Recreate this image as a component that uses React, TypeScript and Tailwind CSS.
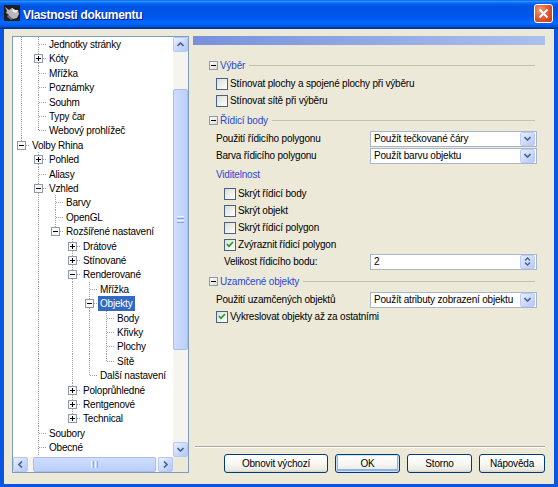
import React from "react";

type Row = { t: string; l: number; box?: "+" | "-"; sel?: boolean };

const ROWS: Row[] = [
  { t: "Jednotky stránky", l: 1 },
  { t: "Kóty", l: 1, box: "+" },
  { t: "Mřížka", l: 1 },
  { t: "Poznámky", l: 1 },
  { t: "Souhm", l: 1 },
  { t: "Typy čar", l: 1 },
  { t: "Webový prohlížeč", l: 1 },
  { t: "Volby Rhina", l: 0, box: "-" },
  { t: "Pohled", l: 1, box: "+" },
  { t: "Aliasy", l: 1 },
  { t: "Vzhled", l: 1, box: "-" },
  { t: "Barvy", l: 2 },
  { t: "OpenGL", l: 2 },
  { t: "Rozšířené nastavení", l: 2, box: "-" },
  { t: "Drátové", l: 3, box: "+" },
  { t: "Stínované", l: 3, box: "+" },
  { t: "Renderované", l: 3, box: "-" },
  { t: "Mřížka", l: 4 },
  { t: "Objekty", l: 4, box: "-", sel: true },
  { t: "Body", l: 5 },
  { t: "Křivky", l: 5 },
  { t: "Plochy", l: 5 },
  { t: "Sítě", l: 5 },
  { t: "Další nastavení", l: 4 },
  { t: "Poloprůhledné", l: 3, box: "+" },
  { t: "Rentgenové", l: 3, box: "+" },
  { t: "Technical", l: 3, box: "+" },
  { t: "Soubory", l: 1 },
  { t: "Obecné", l: 1 },
];

function continues(idx: number, level: number): boolean {
  for (let j = idx + 1; j < ROWS.length; j++) {
    if (ROWS[j].l < level) return false;
    if (ROWS[j].l === level) return true;
  }
  return level === 1;
}

const DOT = "#a0a0a0";

function Cell({ h, full, top, bottom, own, box }: { h: number; full?: boolean; top?: boolean; bottom?: boolean; own?: boolean; box?: "+" | "-" }) {
  const m = Math.floor(h / 2);
  return (
    <svg width="17" height={h} className="block shrink-0">
      {full && <line x1="8.5" y1="0" x2="8.5" y2={h} stroke={DOT} strokeDasharray="1 1" />}
      {own && top && <line x1="8.5" y1="0" x2="8.5" y2={bottom ? h : m} stroke={DOT} strokeDasharray="1 1" />}
      {own && <line x1="9" y1={m + 0.5} x2="17" y2={m + 0.5} stroke={DOT} strokeDasharray="1 1" />}
      {box && (
        <g>
          <rect x="4.5" y={m - 3.5} width="8" height="8" fill="#f7f7f3" stroke="#8e9aab" />
          <rect x="6" y={m} width="5" height="1" fill="#000" />
          {box === "+" && <rect x="8" y={m - 2} width="1" height="5" fill="#000" />}
        </g>
      )}
    </svg>
  );
}

function TreeRow({ r, idx }: { r: Row; idx: number }) {
  const h = idx % 5 === 1 || idx % 5 === 3 ? 15 : 14;
  const cells = [];
  for (let i = 0; i < r.l; i++) {
    cells.push(<Cell key={i} h={h} full={continues(idx, i)} />);
  }
  cells.push(<Cell key="own" h={h} own top bottom={continues(idx, r.l)} box={r.box} />);
  return (
    <div className={h === 15 ? "h-[15px] flex items-center whitespace-nowrap" : "h-[14px] flex items-center whitespace-nowrap"}>
      {cells}
      <span className={r.sel ? "h-full flex items-center px-[2px] bg-[#316ac5] text-white" : "h-full flex items-center px-[2px]"}>{r.t}</span>
    </div>
  );
}

const SB_BTN = "bg-[linear-gradient(135deg,#e9f0fe_0%,#c6d6fb_60%,#b3c8f6_100%)] border border-[#b5c9f4] rounded-[2px] flex items-center justify-center shrink-0";
const ARROW = "#4d6185";

function VScroll() {
  return (
    <div className="w-[15px] h-full flex flex-col bg-[#f5f4ef] shrink-0">
      <div className={SB_BTN + " h-[15px] w-[15px]"}>
        <svg width="7" height="5"><path d="M0.5 4 L3.5 1 L6.5 4" stroke={ARROW} strokeWidth="1.6" fill="none" /></svg>
      </div>
      <div className="h-[37px]" />
      <div className="h-[261px] w-[15px] rounded-[2px] border border-[#a9bdf0] bg-[linear-gradient(to_right,#cfdcfd,#bccff9)] flex flex-col items-center justify-center gap-[1px]">
        <div className="w-[7px] h-px bg-[#eef3ff]" />
        <div className="w-[7px] h-px bg-[#8ca6e3]" />
        <div className="w-[7px] h-px bg-[#eef3ff]" />
        <div className="w-[7px] h-px bg-[#8ca6e3]" />
      </div>
      <div className="flex-1" />
      <div className={SB_BTN + " h-[15px] w-[15px]"}>
        <svg width="7" height="5"><path d="M0.5 1 L3.5 4 L6.5 1" stroke={ARROW} strokeWidth="1.6" fill="none" /></svg>
      </div>
    </div>
  );
}

function HScroll() {
  return (
    <div className="flex-1 h-[15px] flex bg-[#f5f4ef]">
      <div className={SB_BTN + " h-[15px] w-[15px]"}>
        <svg width="5" height="7"><path d="M4 0.5 L1 3.5 L4 6.5" stroke={ARROW} strokeWidth="1.6" fill="none" /></svg>
      </div>
      <div className="w-[5px]" />
      <div className="w-[123px] h-[15px] rounded-[2px] border border-[#a9bdf0] bg-[linear-gradient(to_bottom,#cfdcfd,#bccff9)] flex items-center justify-center gap-[1px]">
        <div className="h-[7px] w-px bg-[#eef3ff]" />
        <div className="h-[7px] w-px bg-[#8ca6e3]" />
        <div className="h-[7px] w-px bg-[#eef3ff]" />
        <div className="h-[7px] w-px bg-[#8ca6e3]" />
      </div>
      <div className="flex-1" />
      <div className={SB_BTN + " h-[15px] w-[15px]"}>
        <svg width="5" height="7"><path d="M1 0.5 L4 3.5 L1 6.5" stroke={ARROW} strokeWidth="1.6" fill="none" /></svg>
      </div>
    </div>
  );
}

function Tree() {
  return (
    <div className="w-[177px] h-[437px] border border-[#7f9db9] bg-white flex flex-col shrink-0">
      <div className="flex h-[420px]">
        <div className="flex-1 overflow-hidden">
          {ROWS.map((r, i) => (
            <TreeRow key={i} r={r} idx={i} />
          ))}
        </div>
        <VScroll />
      </div>
      <div className="flex h-[15px]">
        <HScroll />
        <div className="w-[15px] h-[15px] bg-[#ece9d8]" />
      </div>
    </div>
  );
}

function MiniBox() {
  return (
    <span className="w-[9px] h-[9px] border border-[#8e9aab] bg-[linear-gradient(135deg,#ffffff,#dcdcd4)] flex items-center justify-center shrink-0">
      <span className="w-[5px] h-px bg-black" />
    </span>
  );
}

function Section({ text }: { text: string }) {
  return (
    <div className="h-[14px] flex items-center pl-[16px] pr-[10px]">
      <MiniBox />
      <span className="ml-[2px] text-[#2a48d6]">{text}</span>
      <div className="flex-1 h-px bg-[#c4c1b2] ml-[4px]" />
    </div>
  );
}

function Check({ checked }: { checked?: boolean }) {
  return (
    <span className="w-[12px] h-[12px] border border-[#4a6282] bg-[linear-gradient(135deg,#dcdcd7,#ffffff)] flex items-center justify-center shrink-0">
      {checked && (
        <svg width="8" height="7"><path d="M1 3.2 L3 5.3 L7 1" stroke="#21a121" strokeWidth="1.7" fill="none" /></svg>
      )}
    </span>
  );
}

function CheckRow({ text, checked, deep }: { text: string; checked?: boolean; deep?: boolean }) {
  return (
    <div className={deep ? "h-[17px] flex items-center pl-[31px]" : "h-[17px] flex items-center pl-[23px]"}>
      <Check checked={checked} />
      <span className="ml-[2px]">{text}</span>
    </div>
  );
}

const DD_BTN = "w-[15px] h-[14px] mr-px rounded-[2px] border border-[#bccdf4] bg-[linear-gradient(135deg,#e6eefe_0%,#c9d8fb_60%,#b4c9f6_100%)] flex items-center justify-center shrink-0";

function Combo({ value, spin }: { value: string; spin?: boolean }) {
  return (
    <div className="w-[167px] h-[16px] border border-[#a7b6cc] bg-white flex items-center shrink-0">
      <span className="flex-1 pl-[3px] whitespace-nowrap overflow-hidden">{value}</span>
      <span className={DD_BTN}>
        {spin ? (
          <svg width="7" height="9"><path d="M1 3.5 L3.5 1 L6 3.5 M1 5.5 L3.5 8 L6 5.5" stroke={ARROW} strokeWidth="1.3" fill="none" /></svg>
        ) : (
          <svg width="7" height="5"><path d="M0.5 1 L3.5 4 L6.5 1" stroke={ARROW} strokeWidth="1.6" fill="none" /></svg>
        )}
      </span>
    </div>
  );
}

function ComboRow({ label, value, deep, spin }: { label: string; value: string; deep?: boolean; spin?: boolean }) {
  return (
    <div className="h-[17px] flex items-center">
      <span className={deep ? "w-[177px] pl-[31px] whitespace-nowrap" : "w-[177px] pl-[23px] whitespace-nowrap"}>{label}</span>
      <Combo value={value} spin={spin} />
    </div>
  );
}

const BTN = "h-[19px] rounded-[3px] border border-[#003c74] bg-[linear-gradient(to_bottom,#ffffff_0%,#f6f6f2_55%,#ecebe4_85%,#d8d3c8_100%)] flex items-center justify-center text-black";

function RightPanel() {
  return (
    <div className="ml-[4px] w-[352px] h-[437px] flex flex-col">
      <div className="h-[9px] bg-[linear-gradient(to_right,#7890dc,#a9c1ec)]" />
      <div className="mt-[13px]">
        <Section text="Výběr" />
      </div>
      <div className="mt-[3px]">
        <CheckRow text="Stínovat plochy a spojené plochy při výběru" />
        <CheckRow text="Stínovat sítě při výběru" />
      </div>
      <div className="mt-[4px]">
        <Section text="Řídicí body" />
      </div>
      <div className="mt-[3px]">
        <ComboRow label="Použití řídicího polygonu" value="Použít tečkované čáry" />
        <ComboRow label="Barva řídicího polygonu" value="Použít barvu objektu" />
      </div>
      <div className="mt-[3px] h-[14px] flex items-center pl-[23px] text-[#2a48d6]">Viditelnost</div>
      <div className="mt-[4px]">
        <CheckRow deep text="Skrýt řídicí body" />
        <CheckRow deep text="Skrýt objekt" />
        <CheckRow deep text="Skrýt řídicí polygon" />
        <CheckRow deep checked text="Zvýraznit řídicí polygon" />
        <ComboRow deep spin label="Velikost řídicího bodu:" value="2" />
      </div>
      <div className="mt-[4px]">
        <Section text="Uzamčené objekty" />
      </div>
      <div className="mt-[3px]">
        <ComboRow label="Použití uzamčených objektů" value="Použít atributy zobrazení objektu" />
        <CheckRow checked text="Vykreslovat objekty až za ostatními" />
      </div>
      <div className="flex-1" />
      <div className="ml-[2px] border-t border-t-[#aca899] border-b border-b-white" />
      <div className="mt-[6px] flex justify-end gap-[7px]">
        <button className={BTN + " w-[104px]"}>Obnovit výchozí</button>
        <button className={BTN + " w-[65px] shadow-[inset_0_0_0_1px_#cde0fd,inset_0_-1px_0_2px_#8fb0ea]"}>OK</button>
        <button className={BTN + " w-[65px]"}>Storno</button>
        <button className={BTN + " w-[66px]"}>Nápověda</button>
      </div>
    </div>
  );
}

function TitleBar() {
  return (
    <div className="h-[29px] shrink-0 flex items-center pl-[4px] pr-[5px] bg-[linear-gradient(to_bottom,#0058ee_0%,#3593ff_4%,#288eff_6%,#127dff_8%,#036ffc_10%,#0262ee_14%,#0057e5_20%,#0054e3_24%,#0055eb_56%,#005bf5_66%,#026afe_76%,#0062ef_86%,#0052d6_92%,#0040ab_94%,#003092_100%)]">
      <svg width="16" height="16" className="mb-[3px] shrink-0" viewBox="0 0 16 16">
        <rect x="0" y="0" width="16" height="16" fill="#1d1d24" />
        <polygon points="1,2 5,5 8,3 11,5 14,5 15,9 13,13 9,14 6,12 4,9 2,8 3,6" fill="#b8b8bc" />
        <polygon points="8,3 11,5 14,5 12,8 9,7" fill="#ececf0" />
        <polygon points="4,9 6,12 9,14 7,15 3,12" fill="#6d6d75" />
      </svg>
      <span className="ml-[3px] text-white font-bold text-[12px] tracking-[-0.3px] [text-shadow:1px_1px_#0a1a8c] flex-1">Vlastnosti dokumentu</span>
      <div className="mb-[3px] w-[19px] h-[19px] rounded-[3px] border border-white bg-[radial-gradient(circle_at_30%_30%,#f09a7a,#e0522c_55%,#c23b14)] flex items-center justify-center">
        <svg width="11" height="11"><path d="M1.5 1.5 L9.5 9.5 M9.5 1.5 L1.5 9.5" stroke="#fff" strokeWidth="2" /></svg>
      </div>
    </div>
  );
}

export default function App() {
  return (
    <div className="w-[558px] h-[487px] flex flex-col overflow-hidden font-['Liberation_Sans',Arial,sans-serif] text-[10px] tracking-[-0.2px] text-black">
      <TitleBar />
      <div className="flex-1 min-h-0 bg-[#ece9d8] border-x-4 border-b-[3px] border-[#0a55e2] flex pt-[7px] pl-[8px]">
        <Tree />
        <RightPanel />
      </div>
    </div>
  );
}
